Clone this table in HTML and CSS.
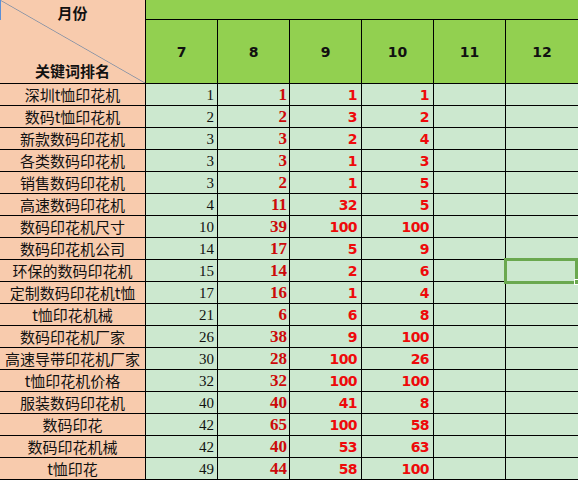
FILE: index.html
```html
<!DOCTYPE html>
<html lang="zh-CN">
<head>
<meta charset="utf-8">
<title>关键词排名</title>
<link rel="stylesheet" href="styles.css">
</head>
<body>
<div class="sheet">
  <div class="corner">
    <span class="corner-top">月份</span>
    <span class="corner-bottom">关键词排名</span>
  </div>
  <div class="band"></div>
  <div class="hd">7</div>
  <div class="hd">8</div>
  <div class="hd">9</div>
  <div class="hd">10</div>
  <div class="hd">11</div>
  <div class="hd">12</div>

  <div class="name">深圳t恤印花机</div><div class="n7">1</div><div class="n8">1</div><div class="n9">1</div><div class="n9">1</div><div class="blank"></div><div class="blank"></div>
  <div class="name">数码t恤印花机</div><div class="n7">2</div><div class="n8">2</div><div class="n9">3</div><div class="n9">2</div><div class="blank"></div><div class="blank"></div>
  <div class="name">新款数码印花机</div><div class="n7">3</div><div class="n8">3</div><div class="n9">2</div><div class="n9">4</div><div class="blank"></div><div class="blank"></div>
  <div class="name">各类数码印花机</div><div class="n7">3</div><div class="n8">3</div><div class="n9">1</div><div class="n9">3</div><div class="blank"></div><div class="blank"></div>
  <div class="name">销售数码印花机</div><div class="n7">3</div><div class="n8">2</div><div class="n9">1</div><div class="n9">5</div><div class="blank"></div><div class="blank"></div>
  <div class="name">高速数码印花机</div><div class="n7">4</div><div class="n8">11</div><div class="n9">32</div><div class="n9">5</div><div class="blank"></div><div class="blank"></div>
  <div class="name">数码印花机尺寸</div><div class="n7">10</div><div class="n8">39</div><div class="n9">100</div><div class="n9">100</div><div class="blank"></div><div class="blank"></div>
  <div class="name">数码印花机公司</div><div class="n7">14</div><div class="n8">17</div><div class="n9">5</div><div class="n9">9</div><div class="blank"></div><div class="blank"></div>
  <div class="name">环保的数码印花机</div><div class="n7">15</div><div class="n8">14</div><div class="n9">2</div><div class="n9">6</div><div class="blank"></div><div class="blank selected"></div>
  <div class="name">定制数码印花机t恤</div><div class="n7">17</div><div class="n8">16</div><div class="n9">1</div><div class="n9">4</div><div class="blank"></div><div class="blank"></div>
  <div class="name">t恤印花机械</div><div class="n7">21</div><div class="n8">6</div><div class="n9">6</div><div class="n9">8</div><div class="blank"></div><div class="blank"></div>
  <div class="name">数码印花机厂家</div><div class="n7">26</div><div class="n8">38</div><div class="n9">9</div><div class="n9">100</div><div class="blank"></div><div class="blank"></div>
  <div class="name">高速导带印花机厂家</div><div class="n7">30</div><div class="n8">28</div><div class="n9">100</div><div class="n9">26</div><div class="blank"></div><div class="blank"></div>
  <div class="name">t恤印花机价格</div><div class="n7">32</div><div class="n8">32</div><div class="n9">100</div><div class="n9">100</div><div class="blank"></div><div class="blank"></div>
  <div class="name">服装数码印花机</div><div class="n7">40</div><div class="n8">40</div><div class="n9">41</div><div class="n9">8</div><div class="blank"></div><div class="blank"></div>
  <div class="name">数码印花</div><div class="n7">42</div><div class="n8">65</div><div class="n9">100</div><div class="n9">58</div><div class="blank"></div><div class="blank"></div>
  <div class="name">数码印花机械</div><div class="n7">42</div><div class="n8">40</div><div class="n9">53</div><div class="n9">63</div><div class="blank"></div><div class="blank"></div>
  <div class="name">t恤印花</div><div class="n7">49</div><div class="n8">44</div><div class="n9">58</div><div class="n9">100</div><div class="blank"></div><div class="blank"></div>
</div>
</body>
</html>
```

FILE: styles.css
```css
html, body {
  margin: 0;
  padding: 0;
  background: #ffffff;
}

.sheet {
  display: grid;
  grid-template-columns: 145px repeat(5, 71px) 72px;
  grid-template-rows: 19px 63px repeat(18, 21px);
  gap: 1px;
  width: 578px;
  padding-bottom: 1px;
  background: #000000;
}

.corner {
  grid-column: 1;
  grid-row: 1 / span 2;
  position: relative;
  display: flex;
  flex-direction: column;
  justify-content: space-between;
  align-items: center;
  padding: 4px 0 4px;
  background-color: #f8cbad;
  background-image: linear-gradient(to top right,
    transparent calc(50% - 0.8px),
    #8c95a6 50%,
    transparent calc(50% + 0.8px));
  font-family: "Noto Sans CJK SC", sans-serif;
  font-weight: 700;
  font-size: 15px;
  line-height: 17px;
  color: #111111;
}

.corner::before {
  content: "";
  position: absolute;
  left: 0;
  top: 0;
  width: 1px;
  height: 20px;
  background: #5b8fd6;
}

.band {
  grid-column: 2 / span 6;
  grid-row: 1;
  background: #92d050;
}

.hd {
  background: #92d050;
  display: flex;
  align-items: center;
  justify-content: center;
  font-family: "DejaVu Sans", sans-serif;
  font-weight: 700;
  font-size: 14px;
  color: #111111;
}

.name {
  background: #f8cbad;
  display: flex;
  align-items: center;
  justify-content: center;
  font-family: "Noto Sans CJK SC", sans-serif;
  font-size: 15px;
  line-height: 21px;
  color: #111111;
  white-space: nowrap;
}

.n7, .n8, .n9, .blank {
  background: #cce8cf;
  display: flex;
  align-items: flex-end;
  justify-content: flex-end;
  padding-right: 3px;
  white-space: nowrap;
}

.n7 {
  font-family: "Liberation Serif", serif;
  font-size: 15px;
  line-height: 19px;
  color: #111111;
}

.n8 {
  font-family: "Liberation Serif", serif;
  font-weight: 700;
  font-size: 17px;
  line-height: 20px;
  color: #cc0a0a;
  padding-right: 2px;
}

.n9 {
  font-family: "DejaVu Sans", sans-serif;
  font-weight: 700;
  font-size: 14px;
  line-height: 19px;
  letter-spacing: -0.6px;
  color: #ee0a0a;
  padding-right: 4px;
}

.selected {
  position: relative;
}

.selected::after {
  content: "";
  position: absolute;
  left: -2px;
  top: -2px;
  right: 0;
  bottom: -3px;
  border: 3px solid #6aa84f;
}

.selected::before {
  content: "";
  position: absolute;
  right: -2px;
  bottom: -4px;
  width: 4px;
  height: 4px;
  background: #6aa84f;
  border: 1px solid #ffffff;
  z-index: 1;
}
```
